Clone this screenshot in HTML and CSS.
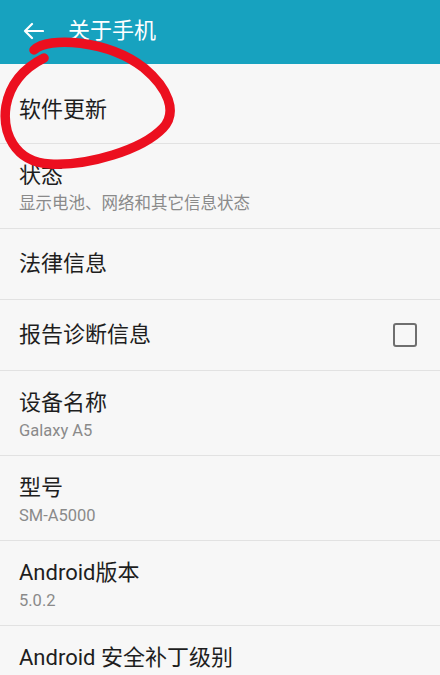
FILE: index.html
```html
<!DOCTYPE html>
<html lang="zh-cn">
<head>
    <meta charset="UTF-8">
    <meta name="viewport" content="width=device-width, initial-scale=1.0">
    <title>关于手机</title>
    <link rel="stylesheet" href="styles.css">
</head>
<body>
    <div class="phone">
        <header class="topbar">
            <svg class="back" width="22" height="18" viewBox="0 0 22 18">
                <path d="M21 9H3M10 2L3 9l7 7" fill="none" stroke="#fff" stroke-width="2.2" stroke-linecap="round" stroke-linejoin="round"/>
            </svg>
            <h1>关于手机</h1>
        </header>

        <ul class="list">
            <li class="item first">
                <div class="title">软件更新</div>
            </li>
            <li class="item two">
                <div class="title">状态</div>
                <div class="sub">显示电池、网络和其它信息状态</div>
            </li>
            <li class="item">
                <div class="title">法律信息</div>
            </li>
            <li class="item check-row">
                <div class="title">报告诊断信息</div>
                <span class="checkbox"></span>
            </li>
            <li class="item two">
                <div class="title">设备名称</div>
                <div class="sub">Galaxy A5</div>
            </li>
            <li class="item two">
                <div class="title">型号</div>
                <div class="sub">SM-A5000</div>
            </li>
            <li class="item two">
                <div class="title">Android版本</div>
                <div class="sub">5.0.2</div>
            </li>
            <li class="item two">
                <div class="title">Android 安全补丁级别</div>
            </li>
        </ul>

        <!-- hand drawn mark over the first row -->
        <svg class="mark" width="190" height="180" viewBox="0 0 190 180">
            <path d="M34 50 C48 36 108 40 144 68 C168 88 178 112 163 128 C142 150 88 166 50 164 C14 162 2 132 6 106 C10 84 24 68 44 58"
                  fill="none" stroke="#ec0f1f" stroke-width="9.5" stroke-linecap="round" stroke-linejoin="round"/>
        </svg>
    </div>
</body>
</html>
```

FILE: styles.css
```css
* {
    box-sizing: border-box;
}
body {
    margin: 0;
    background: #f7f7f7;
    font-family: Roboto, "Noto Sans CJK SC", sans-serif;
}
.phone {
    position: relative;
    width: 440px;
    height: 675px;
    overflow: hidden;
    background: #f7f7f7;
}
.topbar {
    height: 64px;
    background: #17a2bf;
    display: flex;
    align-items: center;
    padding-left: 22px;
}
.back {
    margin-top: -2px;
}
.topbar h1 {
    margin: 0 0 0 24px;
    font-size: 22px;
    font-weight: normal;
    color: #fff;
    line-height: 28px;
    margin-top: -2px;
}
.list {
    list-style: none;
    margin: 0;
    padding: 0;
}
.item {
    padding: 21px 23px 21px 19px;
    border-bottom: 1px solid #e2e2e2;
}
.item.first {
    padding-top: 32px;
    padding-bottom: 19px;
}
.item.two {
    padding-top: 18px;
    padding-bottom: 10px;
}
.check-row {
    display: flex;
    align-items: center;
    justify-content: space-between;
}
.title {
    font-size: 22px;
    line-height: 28px;
    color: #1e1e1e;
}
.sub {
    font-size: 16.5px;
    line-height: 28px;
    color: #8a8a8a;
}
.checkbox {
    width: 24px;
    height: 24px;
    border: 2px solid #6f6f6f;
    border-radius: 3px;
}
.mark {
    position: absolute;
    left: 0;
    top: 0;
}
```
